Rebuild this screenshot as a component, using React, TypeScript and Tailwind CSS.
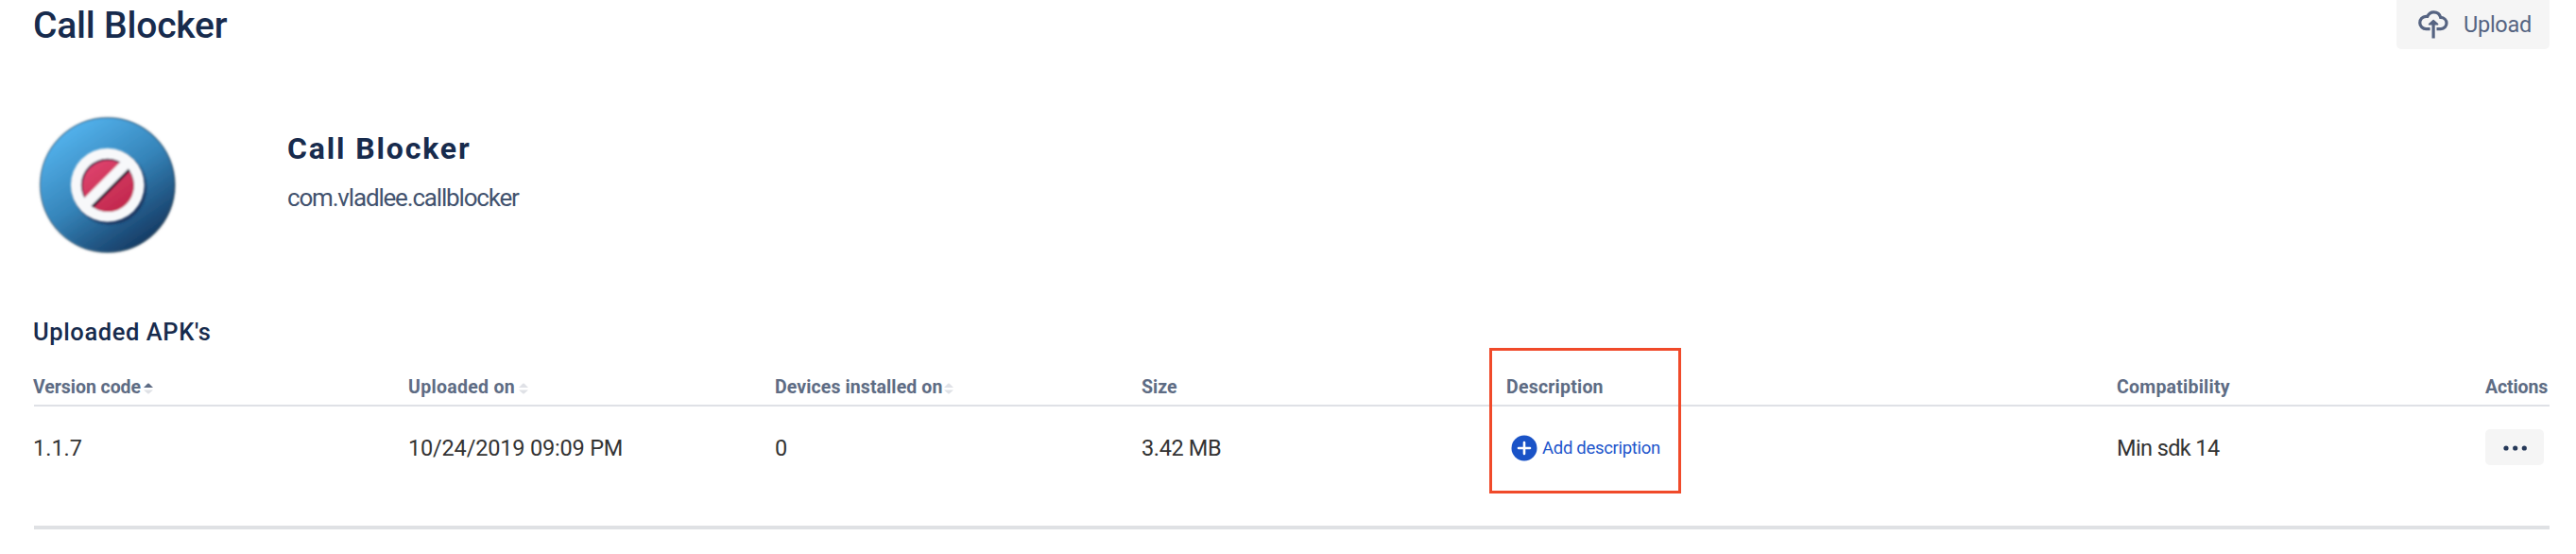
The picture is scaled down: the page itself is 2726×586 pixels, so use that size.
import type { ReactNode } from 'react';

function AppIcon() {
  return (
    <svg className="h-[152px] w-[152px] shrink-0" viewBox="38 120 152 152" aria-hidden="true">
      <defs>
        <linearGradient id="disc" x1="0.2" y1="0.1" x2="0.76" y2="0.92">
          <stop offset="0" stopColor="#52b0ea" />
          <stop offset="0.5" stopColor="#3584b9" />
          <stop offset="1" stopColor="#173e68" />
        </linearGradient>
        <linearGradient id="rim" x1="0.15" y1="0.1" x2="0.85" y2="0.9">
          <stop offset="0" stopColor="#4dacea" />
          <stop offset="0.55" stopColor="#2f7db5" />
          <stop offset="1" stopColor="#14375c" />
        </linearGradient>
        <linearGradient id="red" x1="0.1" y1="0" x2="0.8" y2="1">
          <stop offset="0" stopColor="#e0456f" />
          <stop offset="1" stopColor="#c0264b" />
        </linearGradient>
        <filter id="soft" x="-20%" y="-20%" width="140%" height="140%">
          <feGaussianBlur stdDeviation="1.4" />
        </filter>
        <filter id="edge" x="-10%" y="-10%" width="120%" height="120%">
          <feGaussianBlur stdDeviation="1" />
        </filter>
        <clipPath id="hole">
          <circle cx="114" cy="196" r="28" />
        </clipPath>
      </defs>
      <circle cx="113.8" cy="195.8" r="71.3" fill="#4f606e" filter="url(#soft)" />
      <g filter="url(#edge)">
        <circle cx="113.8" cy="195.6" r="70.2" fill="url(#disc)" stroke="url(#rim)" strokeWidth="1.5" />
      </g>
      <circle cx="116" cy="198.400" r="38.8" fill="#132e58" filter="url(#soft)" />
      <g filter="url(#edge)">
        <circle cx="113.8" cy="195.8" r="39" fill="#f7f8fa" />
        <circle cx="113.800" cy="195.800" r="28" fill="#3a1b45" />
        <circle cx="114.500" cy="196.800" r="27.200" fill="url(#red)" />
        <g clipPath="url(#hole)">
          <path d="M87 225 144 168" stroke="#100c2c" strokeWidth="9" />
        </g>
        <path d="M90 216.500 135 171.500" stroke="#f7f8fa" strokeWidth="11" />
      </g>
    </svg>
  );
}

function UploadIcon() {
  return (
    <svg className="h-8 w-[34px]" viewBox="0 0 34 32" fill="none" stroke="#566482" strokeWidth="3.2" aria-hidden="true">
      <path d="M13.6 20.6H9.500a6.600 6.600 0 0 1-.3-13.200h1.600C12 4.500 14.400 2.800 17.400 2.800c3.700 0 6.500 2.400 7.300 5.600 3.900.2 6.300 2.800 6.300 6s-2.400 6.200-6 6.200h-4.500" />
      <path d="M17.100 30.500V14" />
      <path d="M12.600 15.700 17.100 11.700l4.500 4Z" fill="#566482" strokeWidth="1.600" strokeLinejoin="round" />
    </svg>
  );
}

function SortIcon({ active = false }: { active?: boolean }) {
  return (
    <svg className="mt-[1px] h-[12px] w-[10px] shrink-0" viewBox="0 0 10 12" aria-hidden="true">
      <path d="M0 5 4.200.8a1.200 1.200 0 0 1 1.600 0L10 5Z" fill={active ? '#5e6c84' : '#dfe1e6'} />
      <path d="M0 7.500h10L5.800 11.200a1.200 1.200 0 0 1-1.600 0Z" fill="#dfe1e6" />
    </svg>
  );
}

function HeaderCell({ className, children }: { className: string; children: ReactNode }) {
  return <div className={`flex items-center whitespace-nowrap ${className}`}>{children}</div>;
}

const columns = 'grid grid-cols-[396px_388px_388px_386px_646px_390px_68px]';

export default function App() {
  return (
    <div className="relative h-[586px] w-[2726px] overflow-hidden bg-white pr-7 pl-[35px] font-['Roboto',sans-serif] text-[#172b4d]">
      <header className="flex h-[52px] items-start justify-between">
        <h1 className="pt-[1px] text-[39px] leading-[52px] font-medium tracking-[-0.2px]">Call Blocker</h1>
        <button className="flex h-[52px] w-[162px] items-center rounded-b-[5px] bg-[#f5f5f5] pl-[22px] text-[23.5px] leading-[52px] tracking-[-0.27px] text-[#566482]">
          <UploadIcon />
          <span className="pl-[15px]">Upload</span>
        </button>
      </header>

      <section className="mt-[68px] ml-[3px] flex h-[152px]">
        <AppIcon />
        <div className="pt-[17px] pl-[114px]">
          <h2 className="text-[32px] leading-10 font-bold tracking-[1.85px]">Call Blocker</h2>
          <p className="mt-[12px] text-[26px] leading-10 tracking-[-1.18px] text-[#42526e]">com.vladlee.callblocker</p>
        </div>
      </section>

      <h3 className="mt-[59px] text-[25.5px] leading-10 font-medium tracking-[0.6px]">Uploaded APK's</h3>

      <div>
        <div className={`${columns} mt-[26px] h-[33px] border-b-2 border-[#dfe1e6] pb-[5px] ml-[1px] text-[19.5px] leading-5 font-bold text-[#5e6c84]`}>
          <HeaderCell className="-ml-px gap-[3px] tracking-[-0.05px]">Version code<SortIcon active /></HeaderCell>
          <HeaderCell className="gap-[4px] tracking-[0.31px]">Uploaded on<SortIcon /></HeaderCell>
          <HeaderCell className="gap-[2px] tracking-[0.1px]">Devices installed on<SortIcon /></HeaderCell>
          <HeaderCell className="tracking-[0px]">Size</HeaderCell>
          <HeaderCell className="tracking-[0.22px]">Description</HeaderCell>
          <HeaderCell className="tracking-[0.24px]">Compatibility</HeaderCell>
          <HeaderCell className="tracking-[-0.12px]">Actions</HeaderCell>
        </div>
        <div className={`${columns} ml-[1px] h-[130px] items-start border-b-4 border-[#dfe1e4] pt-[24px] text-[23.5px] leading-10 whitespace-nowrap text-[#333333]`}>
          <div className="-ml-px">1.1.7</div>
          <div className="tracking-[-0.18px]">10/24/2019 09:09 PM</div>
          <div>0</div>
          <div className="tracking-[-0.36px]">3.42 MB</div>
          <button className="flex h-10 items-center pl-[5px] text-[18.5px] tracking-[-0.3px] text-[#1d55cc]">
            <svg className="h-7 w-7" viewBox="0 0 28 28" aria-hidden="true">
              <circle cx="14" cy="14" r="13.5" fill="#1a53c7" />
              <path d="M14 8v12M8 14h12" stroke="#fff" strokeWidth="2.600" strokeLinecap="round" />
            </svg>
            <span className="pl-[5px]">Add description</span>
          </button>
          <div className="tracking-[-0.6px]">Min sdk 14</div>
          <button className="flex h-[38px] w-[62px] items-center justify-center rounded-[5px] bg-[#f5f5f5]" aria-label="More actions">
            <svg className="mt-[2px] h-2 w-[26px]" viewBox="0 0 26 8" fill="#253858" aria-hidden="true">
              <circle cx="4" cy="4" r="2.600" />
              <circle cx="13.700" cy="4" r="2.600" />
              <circle cx="23.300" cy="4" r="2.600" />
            </svg>
          </button>
        </div>
      </div>

      <div className="absolute top-[368px] left-[1576px] h-[154px] w-[203px] border-[3px] border-[#f04a2a]" />
    </div>
  );
}
